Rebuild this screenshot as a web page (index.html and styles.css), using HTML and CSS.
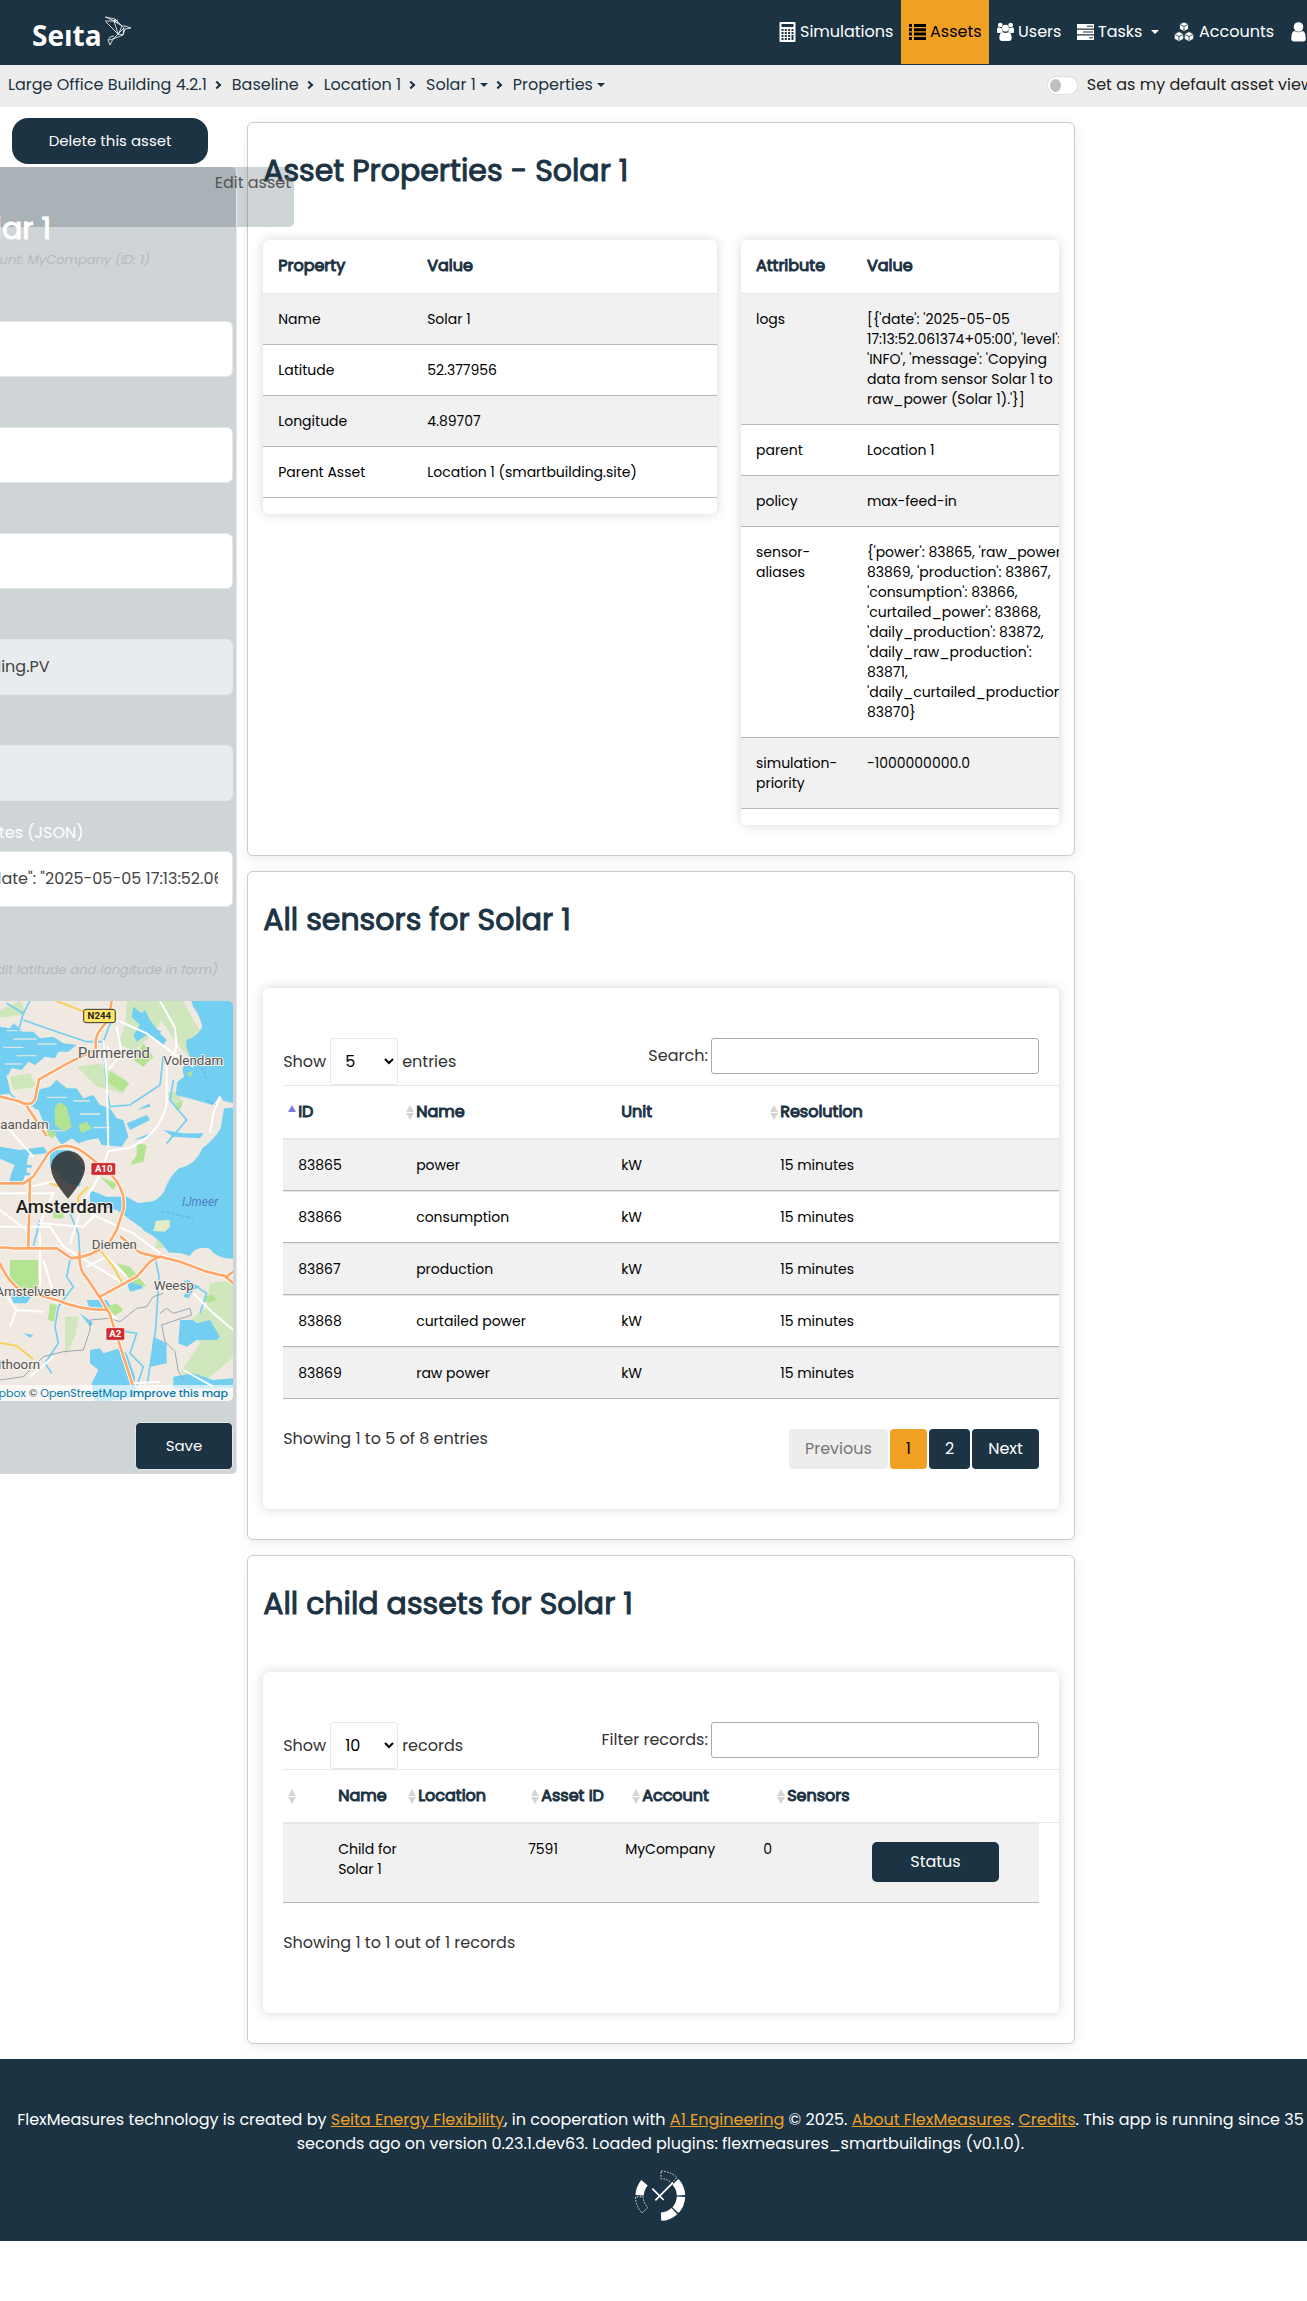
FILE: index.html
```html
<!DOCTYPE html>
<html lang="en">
<head>
<meta charset="utf-8">
<meta name="viewport" content="width=device-width, initial-scale=1">
<title>Solar 1 - Properties</title>
<link rel="stylesheet" href="styles.css">
</head>
<body>
<div class="page">
  <header class="navbar">
    <a class="brand" href="#" aria-label="Seita home">
      <span class="brand-name">Seıta</span>
      <svg class="brand-bird" viewBox="0 0 28 30" fill="none" stroke="#fff" stroke-width=".8" stroke-linejoin="round" aria-hidden="true"><path d="M1 1l10 2 7 7 3 0 6 2-6 1-2 6-10 4-3 6-2-5 2-3 4-1M1 5l9 0 4 13-12-12M11 3l-1 2 8 5-4 9M2 1l12 6M10 5l4-1M20 11l-1 8-5-1M9 23l2-2 9-9M5 24l4-1"/></svg>
    </a>
    <nav class="menu">
      <a class="menu-item" href="#"><svg class="icon" viewBox="0 0 16 20" aria-hidden="true"><rect width="16" height="20" rx="1" fill="#fff"/><path fill="#1c3343" d="M2 2h12v3H2zM2 7h2v2H2zm3.300 0h2v2h-2zm3.300 0h2v2h-2zM12 7h2v2h-2zM2 10h2v2H2zm3.300 0h2v2h-2zm3.300 0h2v2h-2zM12 10h2v2h-2zM2 13h2v2H2zm3.300 0h2v2h-2zm3.300 0h2v2h-2zM12 13h2v5h-2zM2 16h2v2H2zm3.300 0h2v2h-2zm3.300 0h2v2h-2z"/></svg>Simulations</a>
      <a class="menu-item active" href="#"><svg class="icon" viewBox="0 0 17 16" aria-hidden="true"><path d="M0 0h3v3H0zm5 0h12v3H5zM0 4.300h3v3H0zm5 0h12v3H5zM0 8.600h3v3H0zm5 0h12v3H5zM0 13h3v3H0zm5 0h12v3H5z"/></svg>Assets</a>
      <a class="menu-item" href="#"><svg class="icon" viewBox="0 0 18 20" fill="#fff" aria-hidden="true"><circle cx="3.500" cy="2.600" r="2.500"/><circle cx="14.500" cy="2.600" r="2.500"/><path d="M0 10V7q0-2 2-2 1.500 1 3 .5 0 3 1.500 3.800Q5 9.500 4 11H1q-1 0-1-1zM18 10V7q0-2-2-2-1.500 1-3 .5 0 3-1.500 3.800 1.500.2 2.500 1.700h3q1 0 1-1z"/><circle cx="9" cy="6" r="3.600"/><path d="M2.500 17q0-7 3.500-7 3 2 6 0 3.500 0 3.500 7 0 2.500-2.500 2.500H5Q2.500 19.500 2.500 17z"/></svg>Users</a>
      <a class="menu-item" href="#"><svg class="icon" viewBox="0 0 17 16" aria-hidden="true"><path fill="#fff" d="M0 0h17v4.500H0zM0 5.800h17v4.500H0zM0 11.600h17V16H0z"/><path stroke="#1c3343" d="M10 2.200h6M6 8h10M12 13.800h4"/></svg>Tasks<span class="caret"></span></a>
      <a class="menu-item" href="#"><svg class="icon wide" viewBox="0 0 20 20" fill="#fff" stroke="#1c3343" stroke-width=".8" aria-hidden="true"><path d="M10 0l4.500 2v5L10 9.500 5.500 7V2zM5 9.500L9.700 12v5L5 19.500.3 17v-5zM15 9.500l4.700 2.500v5L15 19.500 10.300 17v-5z"/><path d="M6 2.500l4 2 4-2M10 4.500v4.500M1 12.500l4 2 4-2M5 14.500v4M11 12.500l4 2 4-2M15 14.500v4"/></svg>Accounts</a>
      <a class="menu-item" href="#" aria-label="My account"><svg class="icon" viewBox="0 0 13 18" fill="#fff" aria-hidden="true"><circle cx="6.500" cy="4.500" r="4.300"/><path d="M0 15q0-7 3-7 3.500 2.500 7 0 3 0 3 7 0 2.500-2.500 2.500h-8Q0 17.500 0 15z"/></svg></a>
    </nav>
  </header>

  <div class="subbar">
    <nav class="crumbs" aria-label="Breadcrumb">
      <a href="#">Large Office Building 4.2.1</a><i></i>
      <a href="#">Baseline</a><i></i>
      <a href="#">Location 1</a><i></i>
      <a href="#">Solar 1<span class="caret"></span></a><i></i>
      <a href="#">Properties<span class="caret"></span></a>
    </nav>
    <label class="default-view"><input type="checkbox" class="switch">Set as my default asset view</label>
  </div>

  <div class="columns">
    <aside class="side">
      <button class="btn delete" type="button">Delete this asset</button>
      <div class="drawer-tab"></div>
      <form class="drawer">
        <span class="tab-text">Edit asset</span>
        <h2 class="drawer-title">Edit Solar 1</h2>
        <p class="hint owner">Account: MyCompany (ID: 1)</p>
        <div class="field"><label for="f-name">Name</label><input id="f-name" type="text"></div>
        <div class="field"><label for="f-lat">Latitude</label><input id="f-lat" type="text"></div>
        <div class="field"><label for="f-lng">Longitude</label><input id="f-lng" type="text"></div>
        <div class="field"><label for="f-type">Asset type</label><input id="f-type" type="text" value="smartbuilding.PV" readonly></div>
        <div class="field"><label for="f-id">Asset id</label><input id="f-id" type="text" readonly></div>
        <div class="field"><label for="f-attr">Asset attributes (JSON)</label><input id="f-attr" type="text" value='{"logs": [{"date": "2025-05-05 17:13:52.061374+05:00"'></div>
        <p class="hint where">(Edit latitude and longitude in form)</p>
        <div class="map">
          <svg class="map-art" viewBox="0 63 699 1200" role="img" aria-label="Map of Amsterdam">
            <rect y="63" width="699" height="1200" fill="#f0e9e1"/>
            <g fill="#d0e7bd"><path d="M380 63h170l55 100 10 60-30 30-60-70-40-60-20 30-60 60-50-20 20-60zM0 90l60-27 20 40-80 10zM30 290l60-10 20 40-70 10zM230 260l70-10 80 50-10 40-80-20zM700 900v230l-80 70-80-20 60-90-40-60 60-50 10-70zM195 1010l40 0-10 60-30 60zM470 770l30 5-5 30-30 0zM500 340l50-10-20 60z"/></g>
            <g fill="#73cff1">
              <path d="M548 63h151v773q-50 0-70-30-40-10-60 22-30-12-62-10-35-50-75-65l-55-80 70-8q25 0 45-30 15-45 45-70 50-10 70-60 35-25 55-60l10-60-35-10-70-20-40-10 5-40 20-15-5-25q15-20 30-15l-18-50 0-20q35-10 48-40-10-40-28-60-10-40-31-77z"/>
              <path d="M0 140l30 5 10-15 30 25 30 0 20 20 40-5 30 20 40 5-25 20-30 0-10 20-30-5-30 25-20-10-20 25-30-5-10 20-25 5z"/>
              <path d="M110 330l40-10 20-20 30 25 30 0 20 30 30-10 20 30 30 10 20 30 20 5 15 50-20 30-60-5-10-20-30 5-30 10-20-15-30 20-20-30-20-5-30-70-15-5z"/>
              <path d="M0 250l20 40 10 50-30 5zM0 500l60 10 70-10 15 20-60 5-5 30 15 0 0 8-15 0 0 15 10 0 0 8-15 0-10 30-40 0 10-40 10-20-45-20zM150 510l60 0 40 50-10 60-40-10-50-50zM270 630l50 20 60 0 90 50 10 60-60-20-70-50-80-20zM270 1110l30-5 10 15 50-15 20 15 25 70 0 60-120 20-10-60 20-40-25-20zM260 960l60 0 20 30-70 0zM540 1020l40 0 10 10 40-10 30 50-10 10-60 0-30 20-25-10zM460 1070l40 20 0 60-50 10zM520 1190l60-10 60 20 59-5v30H520zM30 940l70 0-20 30-40 0zM400 80l25 20 10-10 15 30 30 40 20 20-10 15-50-30-30 20-10-20 20-30-25-25zM380 905l40 0 10 20-40 10z"/>
              <path d="M380 430l60-25 10 15-60 30zM490 450l60 10 60 0-10 15-80-5zM410 390l40-20 0 10zM400 480l50-20 0 10zM455 140l30 15-10 6-25-15zM240 1000l40 30-10 10zM70 1060l30 5-10 8zM550 900l50 20-20 10-15 25-15-5 15-25z"/>
            </g>
            <g fill="#b4e391"><path d="M330 275l58 35-20 25-48-30zM165 380l15-15 20 15 15 60-20 15-30-20zM30 840h85v95H60L30 890zM410 490l30 5-10 50-40 10 20-30zM430 190l30 40-30 30-30-20zM300 590l50 20-10 20zM350 850l40 10 50 60-40-10zM320 980l30-10 20 20-30 20zM150 970l20 5-8 50-18-5zM560 280l20-8-8 20zM235 435l25-10 15 20-30 15zM140 450l30 10-10 15-25-10zM610 950l30-5 10 15-30 10zM160 690l30 0 0 25-30 0zM530 370l18-10-5 25-15 5z"/></g>
            <path fill="#f0e9e1" d="M635 380l25-33 10 15 30 8v12l-40 5-20 20-5-5z"/>
            <path fill="#e6ebc8" d="M468 722l40-2 2 20-15 15-35-2z"/>
            <path fill="#f0e9e1" opacity=".8" d="M20 150h50v4H20zM40 175h70v4H40zM10 200h60v4H10zM50 225h60v4H50zM110 190h60v4h-60zM15 250h50v4H15zM140 350h60v4h-60zM220 360h50v5h-50zM240 400h60v5h-60zM280 440h50v5h-50zM150 450h40v4h-40z"/>
            <g fill="none" stroke="#73cff1" stroke-width="5"><path d="M20 70l50 30-20 70M70 100l20-37M70 120l100 35 90 30 50 0 30-80-10-42M310 190l10 140 10 50 60-5 90-60 10-90M10 260l20 80 30 30 60 10M210 700l25 60 5 70-30 10-10 50 20 30-45 60-10 60 10 50-40 60 20 30M465 830l12 60-10 160-25 160M350 1050l60 10-20 60 40 40-20 60M120 720l-20 80M520 300l-10 60 50 60-60 70M560 900l60 40-20 60"/></g>
            <g fill="none" stroke="#fff" stroke-width="6"><path d="M350 120l90 40 80 60 60 40M480 63l45 80 5 60-30 50v120q-20 90-110 130l-65 10q-25 90-75 150l-40 130M310 180l10 110 5 210M350 140l15 80-40 50M0 640h160l-40 90 130 10 50-50M20 440l80 90M0 690l80 60M120 760v160M0 740h150l40 60 180 110M270 700l130 60 80 60M130 840l40 130M300 960l50 60M0 920l50 70 80 5M50 990l-20 50M90 1190l70-60M260 860l60-30 60 60M320 200l40 40M580 940l60 60 60 50M400 1210l80-5M550 1170l90 50M90 620l90-20M660 350l-20 50-10 60"/></g>
            <g fill="none" stroke="#97a8b3" stroke-width="3"><path d="M0 1200l70-10 60-60 60-15 60-5 20-60 0-30 60-5 30 10 50-40 30-5 20-30 30-10M480 1000l20-15 20 15 50-15 5 20-90 30 10 50 30 30 10 60 20 30"/></g>
            <path d="M485 693l95 23M618 360l30 14M590 255q28 15 28 40" fill="none" stroke="#4d9fd8" stroke-width="2" stroke-dasharray="10 5"/>
            <g fill="none" stroke="#f7d15c" stroke-width="6"><path d="M170 63l90 35M0 1088l50 10 50 40M300 810l40 50 30 55M235 670v-20l30-30M150 610l30 10"/></g>
            <g fill="none" stroke="#fff" stroke-width="13"><path d="M335 63l-10 60q-35 30-38 60v25l-80 40-90 50-12 60q-15 25-50 5L0 350M80 378l60 90M0 610h70l30-20 45-70q50-45 110 0l75 60q50 50 40 110l-20 60-20 35q-50 45-115 50l-45-30-130 0q-60-10-95 20M90 600l-5 200M238 815q0 60 20 75l40 60 30 50 20 60 50 155M0 850q20 50 60 80l110 30q70 30 150 30M300 950l110-60 40-45 30-15 60 15 80 30 60 15 20-15M360 768l60 50 60 15M670 885l30 25"/></g>
            <g fill="none" stroke="#fea768" stroke-width="8"><path d="M335 63l-10 60q-35 30-38 60v25l-80 40-90 50-12 60q-15 25-50 5L0 350M80 378l60 90M0 610h70l30-20 45-70q50-45 110 0l75 60q50 50 40 110l-20 60-20 35q-50 45-115 50l-45-30-130 0q-60-10-95 20M90 600l-5 200M238 815q0 60 20 75l40 60 30 50 20 60 50 155M0 850q20 50 60 80l110 30q70 30 150 30M300 950l110-60 40-45 30-15 60 15 80 30 60 15 20-15M360 768l60 50 60 15M670 885l30 25"/></g>
            <rect x="251" y="88" width="95" height="40" rx="7" fill="#ffe566" stroke="#333" stroke-width="3"/>
            <g fill="#cf2c31" stroke="#fff" stroke-width="2"><rect x="273" y="548" width="74" height="38" rx="5"/><rect x="318" y="1043" width="56" height="38" rx="5"/></g>
            <g class="road-no"><text x="298" y="117" fill="#222">N244</text><text x="311" y="576" fill="#fff">A10</text><text x="346" y="1071" fill="#fff">A2</text></g>
            <g class="place"><text x="234" y="234">Purmerend</text><text class="small" x="490" y="254">Volendam</text><text x="-23" y="448" class="small">Zaandam</text><text x="275" y="807" class="small">Diemen</text><text x="461" y="931" class="small">Weesp</text><text x="-14" y="948" class="small">Amstelveen</text><text x="-32" y="1167" class="small">Uithoorn</text><text x="47" y="700" class="city">Amsterdam</text><text x="546" y="679" class="water">IJmeer</text></g>
            <path d="M204 656q-51-60-51-93a51 50 0 0 1 102 0q0 33-51 93z" fill="#333" opacity=".88"/>
          </svg>
          <div class="credit">© <a href="#">Mapbox</a> © <a href="#">OpenStreetMap</a> <a href="#"><b>Improve this map</b></a></div>
        </div>
        <button class="btn save" type="button">Save</button>
      </form>
    </aside>

    <main class="main">
      <section class="card">
        <h1 class="card-title">Asset Properties - Solar 1</h1>
        <div class="pair">
          <div class="panel">
            <table class="props">
              <thead><tr><th>Property</th><th>Value</th></tr></thead>
              <tbody>
                <tr><td>Name</td><td>Solar 1</td></tr>
                <tr><td>Latitude</td><td>52.377956</td></tr>
                <tr><td>Longitude</td><td>4.89707</td></tr>
                <tr><td>Parent Asset</td><td>Location 1 (smartbuilding.site)</td></tr>
              </tbody>
            </table>
          </div>
          <div class="panel">
            <table class="attrs">
              <thead><tr><th>Attribute</th><th>Value</th></tr></thead>
              <tbody>
                <tr><td>logs</td><td>[{'date': '2025-05-05<br>17:13:52.061374+05:00', 'level':<br>'INFO', 'message': 'Copying<br>data from sensor Solar 1 to<br>raw_power (Solar 1).'}]</td></tr>
                <tr><td>parent</td><td>Location 1</td></tr>
                <tr><td>policy</td><td>max-feed-in</td></tr>
                <tr><td>sensor-<br>aliases</td><td>{'power': 83865, 'raw_power':<br>83869, 'production': 83867,<br>'consumption': 83866,<br>'curtailed_power': 83868,<br>'daily_production': 83872,<br>'daily_raw_production':<br>83871,<br>'daily_curtailed_production':<br>83870}</td></tr>
                <tr><td>simulation-<br>priority</td><td>-1000000000.0</td></tr>
              </tbody>
            </table>
          </div>
        </div>
      </section>

      <section class="card">
        <h1 class="card-title">All sensors for Solar 1</h1>
        <div class="panel listing">
          <div class="controls">
            <label class="length">Show <select><option>5</option><option>10</option></select> entries</label>
            <label class="search">Search: <input type="search"></label>
          </div>
          <table class="grid sensors">
            <thead><tr><th class="sort asc">ID</th><th class="sort">Name</th><th>Unit</th><th class="sort">Resolution</th></tr></thead>
            <tbody>
              <tr><td>83865</td><td>power</td><td>kW</td><td>15 minutes</td></tr>
              <tr><td>83866</td><td>consumption</td><td>kW</td><td>15 minutes</td></tr>
              <tr><td>83867</td><td>production</td><td>kW</td><td>15 minutes</td></tr>
              <tr><td>83868</td><td>curtailed power</td><td>kW</td><td>15 minutes</td></tr>
              <tr><td>83869</td><td>raw power</td><td>kW</td><td>15 minutes</td></tr>
            </tbody>
          </table>
          <div class="foot">
            <p class="info">Showing 1 to 5 of 8 entries</p>
            <div class="pager">
              <button class="page-btn" type="button" disabled>Previous</button>
              <button class="page-btn current" type="button">1</button>
              <button class="page-btn" type="button">2</button>
              <button class="page-btn" type="button">Next</button>
            </div>
          </div>
        </div>
      </section>

      <section class="card">
        <h1 class="card-title">All child assets for Solar 1</h1>
        <div class="panel listing">
          <div class="controls">
            <label class="length">Show <select><option>10</option><option>25</option></select> records</label>
            <label class="search">Filter records: <input type="search"></label>
          </div>
          <table class="grid child-head">
            <thead><tr><th class="sort"></th><th>Name</th><th class="sort">Location</th><th class="sort">Asset ID</th><th class="sort">Account</th><th class="sort">Sensors</th></tr></thead>
          </table>
          <table class="grid child-body">
            <tbody><tr><td></td><td>Child for<br>Solar 1</td><td></td><td>7591</td><td>MyCompany</td><td>0</td><td class="action"><button class="btn status" type="button">Status</button></td></tr></tbody>
          </table>
          <div class="foot">
            <p class="info">Showing 1 to 1 out of 1 records</p>
          </div>
        </div>
      </section>
    </main>
  </div>

  <footer class="footer">
    <p>FlexMeasures technology is created by <a href="#">Seita Energy Flexibility</a>, in cooperation with <a href="#">A1 Engineering</a> © 2025. <a href="#">About FlexMeasures</a>. <a href="#">Credits</a>. This app is running since 35<br>seconds ago on version 0.23.1.dev63. Loaded plugins: flexmeasures_smartbuildings (v0.1.0).</p>
    <svg class="dial" viewBox="30 24 153 156" fill="none" stroke="#fff" aria-hidden="true">
      <g stroke-width="25"><path d="M151.300 59.700A62 62 0 0 1 168 99.800M168 104.200A62 62 0 0 1 151.300 144.300M148.300 147.300A62 62 0 0 1 108.200 164M44 99.800A62 62 0 0 1 58.500 62.100"/></g>
      <g stroke-width="2.500" stroke-dasharray="5 4"><path d="M108 27Q136 28 156 46L141 63Q126 50 108 50zM31 105Q33 134 51 153L68 137Q56 122 54 104z"/></g>
      <g stroke-width="5"><path d="M91 115L144 62M82 80l34 34"/></g>
    </svg>
  </footer>
</div>
</body>
</html>
```
FILE: styles.css
```css
:root {
  --navy: #1c3343;
  --amber: #f0a124;
  --veil: rgba(28, 51, 67, .21);
}

* { box-sizing: border-box; }

body {
  margin: 0;
  overflow-x: hidden;
  background: #fff;
  color: #333;
  font: 16px/24px Poppins, Inter, sans-serif;
}

p, h1, h2 { margin: 0; }
a { color: inherit; text-decoration: none; }
button, input, select { font: inherit; margin: 0; }

/* the row gutter reaches past the right edge of the window */
.page { margin-right: -14px; }

/* Top bar */
.navbar {
  display: flex;
  justify-content: space-between;
  height: 65px;
  padding-left: 32px;
  background: var(--navy);
  color: #fff;
}
.brand { display: flex; align-items: center; gap: 2px; }
.brand-name { font: bold 28px/28px "Open Sans", sans-serif; padding-top: 4px; }
.brand-bird { width: 28px; height: 30px; align-self: flex-start; margin-top: 16px; }
.menu { display: grid; grid-template-columns: 130px 88px 80px 97px 116px 39px; height: 64px; }
.menu-item { display: flex; align-items: center; gap: 4px; padding: 0 8px; white-space: nowrap; }
.menu-item.active { background: var(--amber); color: #000; }
.icon { width: 17px; height: 20px; flex: none; }
.icon.wide { width: 20px; margin-right: 1px; }
.caret {
  display: inline-block;
  margin-left: 4px;
  border: 4px solid transparent;
  border-top-color: currentColor;
  border-bottom: 0;
  vertical-align: 3px;
}
.menu .caret { margin-left: 5px; }

/* Breadcrumb bar */
.subbar {
  display: flex;
  justify-content: space-between;
  align-items: center;
  height: 42px;
  padding: 0 7px 2px 8px;
  background: #ededed;
  white-space: nowrap;
}
.crumbs { display: flex; align-items: center; color: var(--navy); }
.crumbs i {
  width: 6px;
  height: 6px;
  margin: 0 12px 0 7px;
  border: solid var(--navy);
  border-width: 2px 2px 0 0;
  transform: rotate(45deg);
}
.default-view { display: flex; align-items: center; gap: 9px; color: #222; }
.switch {
  appearance: none;
  width: 31px;
  height: 19px;
  padding: 2px;
  border: 1px solid #ddd;
  border-radius: 10px;
  background: #fff;
}
.switch::before {
  content: "";
  display: block;
  width: 11px;
  height: 13px;
  border-radius: 50%;
  background: #bfbfbf;
}

/* Columns */
.columns { display: grid; grid-template-columns: 2fr 8fr 2fr; }
.side { position: relative; padding: 11px 12px; }
.main { display: grid; gap: 15px; padding: 15px 26px 15px 27px; min-width: 0; }

.btn {
  border: 0;
  border-radius: 5px;
  background: var(--navy);
  color: #fff;
  text-align: center;
}
.delete { width: 100%; height: 46px; border-radius: 16px; font-size: 15px; }

/* Off-canvas edit drawer, only its right part is inside the window */
.drawer-tab {
  position: absolute;
  top: 60px;
  left: 0;
  width: 294px;
  height: 60px;
  border-radius: 0 5px 5px 0;
  background: var(--veil);
}
.drawer {
  position: absolute;
  top: 60px;
  left: -110px;
  width: 347px;
  height: 1307px;
  padding: 44px 3px 5px 5px;
  border-right: 1px solid #e4e7e9;
  border-radius: 0 5px 5px 0;
  background: var(--veil);
  color: #fff;
}
.tab-text { position: absolute; top: 4px; right: -55px; color: #555; white-space: nowrap; }
.drawer-title { padding-right: 182px; font-size: 30px; line-height: 36px; text-align: right; white-space: nowrap; }
.hint { color: #b5b9bb; font-size: 13px; line-height: 20px; font-style: italic; text-align: right; white-space: nowrap; }
.owner { margin: 3px 0 21px; padding-right: 83px; }
.where { margin: 53px 0 21px; padding-right: 15px; }
.field label { display: block; line-height: 24px; margin-bottom: 6px; padding-left: 3px; }
.field input {
  display: block;
  width: 100%;
  height: 56px;
  margin-bottom: 20px;
  padding: 0 14px 1px 18px;
  border: 1px solid #e4e7e9;
  border-radius: 6px;
  background: #fff;
  color: #444;
}
.field input:read-only { background: #e8ecee; }
.map { position: relative; display: flex; justify-content: flex-end; height: 400px; margin-bottom: 21px; border-radius: 5px; overflow: hidden; }
.map-art { width: 233px; height: 400px; }
.map-art text { font-family: "Roboto", sans-serif; }
.place text { font-size: 44px; fill: #555; stroke: #f5f1ec; stroke-width: 6px; paint-order: stroke; }
.place .small { font-size: 40px; }
.place .city { font-size: 56px; fill: #222; font-weight: 500; }
.place .water { font-size: 36px; fill: #4d7fc4; font-style: italic; stroke: none; }
.map-art .road-no { font-size: 29px; font-weight: 700; text-anchor: middle; }
.credit {
  position: absolute;
  right: 0;
  bottom: 0;
  padding: 0 5px;
  background: rgba(255, 255, 255, .65);
  color: #555;
  font-size: 11px;
  line-height: 16px;
  white-space: nowrap;
}
.credit a { color: #0078a8; }
.credit b { font-weight: 500; }
.save { display: block; width: 98px; height: 48px; margin-left: auto; font-size: 15px; border: 1px solid #e4e7e9; }

/* Cards and panels */
.card {
  min-width: 0;
  padding: 0 15px 30px;
  border: 1px solid #ccc;
  border-radius: 6px;
  background: #fff;
  box-shadow: 0 3px 12px rgba(0, 0, 0, .08);
}
.card-title { padding: 28px 0 48px; color: var(--navy); font-size: 30px; line-height: 40px; }
/* headings thicken the regular cut */
.card-title, .drawer-title, th { font-weight: 400; -webkit-text-stroke: 1px; }
.pair { display: grid; grid-template-columns: 454fr 318fr; gap: 24px; align-items: start; margin-top: 1px; }
.panel {
  min-width: 0;
  padding-bottom: 16px;
  border-radius: 6px;
  background: #fff;
  box-shadow: 0 0 12px rgba(0, 0, 0, .16);
  overflow: hidden;
}

table { width: 100%; border-spacing: 0; table-layout: fixed; }
th, td { padding: 15px; text-align: left; vertical-align: top; white-space: nowrap; }
th { color: var(--navy); line-height: 22px; border-bottom: 1px solid #e6e6e6; }
td { color: #000; font-size: 14px; line-height: 20px; border-bottom: 1px solid #b5b8ba; }
tbody tr:nth-child(odd) { background: #f1f1f1; }
.pair th { padding-bottom: 16px; }
.props th:first-child { width: 149px; }
.attrs th:first-child { width: 111px; }

/* Listings */
.listing { padding: 50px 20px 40px; }
.controls { display: flex; justify-content: space-between; align-items: flex-start; }
.length, .search { display: flex; align-items: center; gap: 4px; }
.search { gap: 3px; }
.length select {
  width: 68px;
  height: 47px;
  padding: 0 0 0 10px;
  border: 1px solid #e6e6e6;
  border-radius: 3px;
  background: #fff;
  color: #000;
}
.search input { width: 328px; height: 36px; border: 1px solid #aaa; border-radius: 3px; background: #fff; }
.grid { width: calc(100% + 20px); }
.grid th { border-top: 1px solid #e6e6e6; }
.grid td { border-top: 1px solid #e6e6e6; }
.sensors th:nth-child(1) { width: 118px; }
.sensors th:nth-child(2) { width: 205px; }
.sensors th:nth-child(3) { width: 159px; }
.child-head th { height: 54px; }
.child-head th:nth-child(1) { width: 40px; }
.child-head th:nth-child(2) { width: 80px; }
.child-head th:nth-child(3) { width: 123px; }
.child-head th:nth-child(4) { width: 101px; }
.child-head th:nth-child(5) { width: 145px; }
.child-body { width: 100%; }
.child-body td:nth-child(1) { width: 40px; }
.child-body td:nth-child(2) { width: 80px; }
.child-body td:nth-child(3) { width: 110px; }
.child-body td:nth-child(4) { width: 97px; }
.child-body td:nth-child(5) { width: 138px; }
.child-body td:nth-child(6) { width: 96px; }
.child-body .action { padding: 18px 40px 20px 28px; }
.status { display: block; width: 100%; height: 40px; font-size: 16px; }

.sort { position: relative; }
.sort::before, .sort::after {
  content: "";
  position: absolute;
  left: 5px;
  border: 4px solid transparent;
}
.sort::before { top: 19px; border-top: 0; border-bottom: 7px solid #d5d5d5; }
.sort::after { top: 27px; border-bottom: 0; border-top: 7px solid #d5d5d5; }
.asc::before { border-bottom-color: #7b7fdc; }
.asc::after { display: none; }

.foot { display: flex; justify-content: space-between; align-items: flex-start; height: 70px; padding-top: 30px; }
.info { margin-top: -2px; }
.pager { display: flex; gap: 2px; }
.page-btn {
  height: 40px;
  padding: 0 16px;
  border: 0;
  border-radius: 4px;
  background: var(--navy);
  color: #fff;
}
.page-btn.current { background: var(--amber); color: #000; }
.page-btn:disabled { background: #ededed; color: #777; }

/* Footer */
.footer {
  display: flex;
  flex-direction: column;
  align-items: center;
  gap: 14px;
  padding: 49px 0 19px;
  background: var(--navy);
  color: #fff;
  text-align: center;
  white-space: nowrap;
}
.footer a { color: var(--amber); text-decoration: underline; }
.dial { width: 51px; height: 52px; }
```
